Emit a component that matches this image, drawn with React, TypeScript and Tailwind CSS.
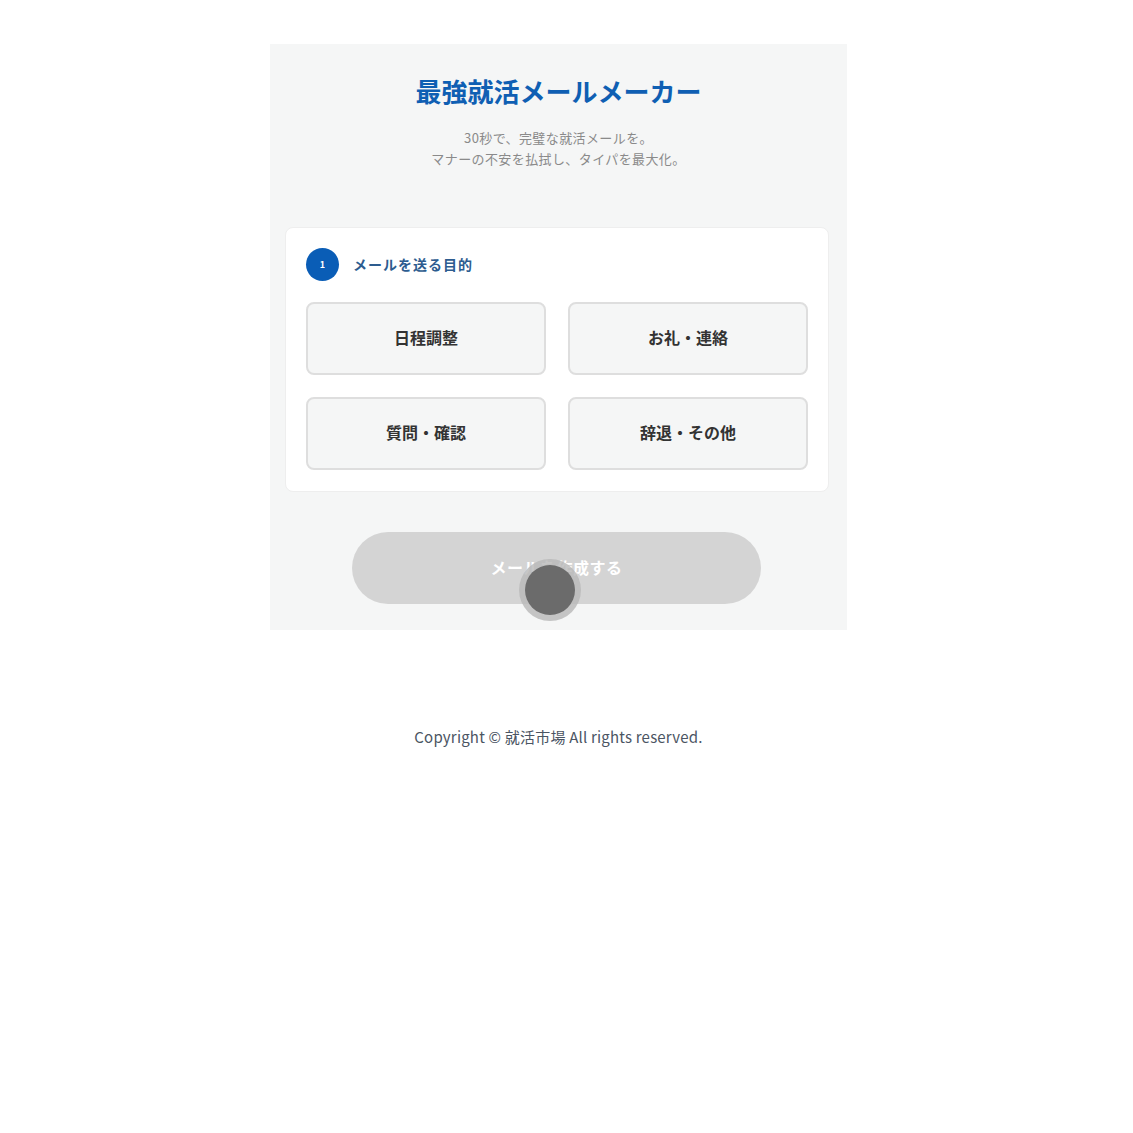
import React, { useState } from 'react'

const purposes = ['日程調整', 'お礼・連絡', '質問・確認', '辞退・その他']

export default function App() {
  const [selected, setSelected] = useState<string | null>(null)

  return (
    <div
      className="min-h-screen bg-white pr-[16px]"
      style={{ fontFamily: '"Noto Sans CJK JP", "Noto Sans", sans-serif' }}
    >
      <div className="mx-auto w-[577px] pt-[44px]">
        {/* Main panel */}
        <div className="bg-[#f5f6f6] px-[15px] pb-[26px]">
          <div className="pt-[28px] text-center">
            <h1 className="text-[26px] font-bold leading-[38px] text-[#0f5fb3]">最強就活メールメーカー</h1>
            <p className="mt-[17px] text-[13px] leading-[21px] tracking-[0.4px] text-[#8a8a8a]">
              30秒で、完璧な就活メールを。
              <br />
              マナーの不安を払拭し、タイパを最大化。
            </p>
          </div>

          {/* Step card */}
          <div className="mt-[58px] mr-[3px] rounded-lg border border-[#eeeeee] bg-white px-[20px] pt-[20px] pb-[21px]">
            <div className="flex items-center gap-[14px]">
              <div className="flex h-[33px] w-[33px] items-center justify-center rounded-full bg-[#0a5db6] text-[9px] font-bold text-white">
                1
              </div>
              <span className="text-[14px] font-bold tracking-[1px] text-[#2d5c8f]">メールを送る目的</span>
            </div>
            <div className="mt-[21px] grid grid-cols-2 gap-x-[22px] gap-y-[22px]">
              {purposes.map((p) => (
                <button
                  key={p}
                  onClick={() => setSelected(p)}
                  className={`h-[73px] rounded-lg border-2 pb-[4px] text-[16px] font-bold text-[#333333] ${
                    selected === p ? 'border-[#0a5db6] bg-[#eef4fb]' : 'border-[#dedede] bg-[#f5f6f6]'
                  }`}
                >
                  {p}
                </button>
              ))}
            </div>
          </div>

          {/* Generate button */}
          <div className="relative mt-[40px] flex justify-center pr-[4px]">
            <button
              disabled={!selected}
              className="h-[72px] w-[409px] rounded-full bg-[#d4d4d4] pb-[3px] text-[16px] font-bold tracking-[0.5px] text-white"
            >
              メールを作成する
            </button>
            {/* touch indicator */}
            <div className="pointer-events-none absolute left-[234px] top-[27px] flex h-[62px] w-[62px] items-center justify-center rounded-full bg-[#b8b8b8]/80">
              <div className="h-[50px] w-[50px] rounded-full bg-[#6b6b6b]" />
            </div>
          </div>
        </div>

        <footer className="mt-[96px] text-center text-[15px] tracking-[0.2px] text-[#4b5563]">
          Copyright © 就活市場 All rights reserved.
        </footer>
      </div>
    </div>
  )
}
